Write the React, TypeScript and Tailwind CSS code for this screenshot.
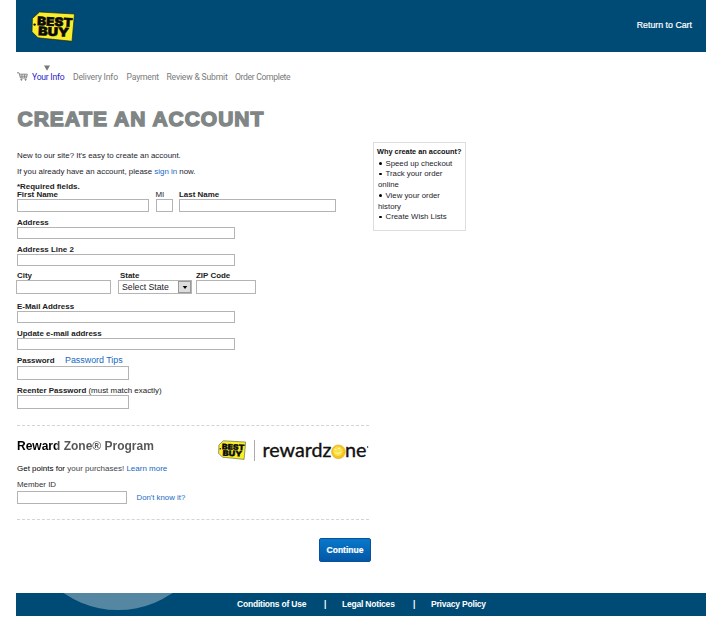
import type { ReactNode } from "react";

const INPUT = "block border border-[#b4b4b4] bg-white outline-none";

function TagLogo({ className }: { className: string }) {
  return (
    <svg viewBox="0 0 44 31" className={className} aria-label="Best Buy">
      <path d="M8.5 1 L43.5 3 L41 30.3 L7 26.8 L1 20.8 L1.4 7.5 Z" fill="#f8ee2c" stroke="#1c2a1c" strokeWidth=".7" />
      <circle cx="3.6" cy="13.6" r="1.2" fill="#111" />
      <g transform="rotate(2.5 22 15)" fontFamily="Inter, Liberation Sans, sans-serif" fontWeight="900" fill="#0a0a0a" stroke="#0a0a0a" strokeWidth=".5">
        <text x="6" y="15" fontSize="12" textLength="35.5" lengthAdjust="spacingAndGlyphs">BEST</text>
        <text x="7.4" y="25" fontSize="12" textLength="31" lengthAdjust="spacingAndGlyphs">BUY</text>
      </g>
    </svg>
  );
}

function Header() {
  return (
    <header className="flex h-[52px] items-center justify-between bg-[#004b75] pl-[15px] pr-[14px]">
      <TagLogo className="h-[31px] w-[44px]" />
      <a className="text-[8.8px] text-white [-webkit-text-stroke:0.2px_white]">Return to Cart</a>
    </header>
  );
}

function Steps() {
  return (
    <nav className="flex h-[50px] items-center font-[Roboto,sans-serif] text-[8.6px] tracking-[-0.18px] whitespace-nowrap text-[#7a7a7a]">
      <svg viewBox="0 0 11 10" className="ml-px h-[10px] w-[11px]" fill="none" stroke="#888" strokeWidth="1">
        <path d="M0 .8H2L3.5 6H9.5L10.3 2.2H2.6M3 4.2H10M5 2.2V6M7.6 2.2V6" />
        <circle cx="4.4" cy="7.7" r=".6" fill="#777" />
        <circle cx="8.6" cy="7.7" r=".6" fill="#777" />
      </svg>
      <span className="relative ml-[4px] w-[41px] tracking-[-0.25px] text-[#2a22c8]">
        Your Info
        <svg viewBox="0 0 6 6" className="absolute -top-[6px] left-[12px] size-[6px]">
          <path d="M0 .5H6L3 5.8Z" fill="#777" />
        </svg>
      </span>
      <span className="w-[53.5px]">Delivery Info</span>
      <span className="w-[40px]">Payment</span>
      <span className="w-[68.5px]">Review &amp; Submit</span>
      <span className="tracking-[-0.34px]">Order Complete</span>
    </nav>
  );
}

function Label({ children, className = "leading-[9.5px]" }: { children: ReactNode; className?: string }) {
  return <label className={`block h-[8px] text-[7.95px] font-bold whitespace-nowrap text-[#222] ${className}`}>{children}</label>;
}

function Why() {
  const item = "before:mr-[4px] before:ml-px before:inline-block before:size-[2.5px] before:rounded-full before:bg-black before:align-[1px] before:content-['']";
  return (
    <aside className="mt-[6px] ml-[4px] h-[89px] w-[93px] border border-[#ddd] pt-[4px] pl-[3px] text-[7.8px] leading-[10.75px] whitespace-nowrap text-[#1c1c2c]">
      <h2 className="mb-[1.5px] text-[7.35px] leading-[10px] font-bold text-[#111]">Why create an account?</h2>
      <ul className="pl-px">
        <li className={item}>Speed up checkout</li>
        <li className={item}>Track your order<br />online</li>
        <li className={item}>View your order<br />history</li>
        <li className={item}>Create Wish Lists</li>
      </ul>
    </aside>
  );
}

function Form() {
  return (
    <form className="w-[353px] pl-[1px] text-[7.9px] whitespace-nowrap text-[#1c1c2c]">
      <p className="mt-[11px] h-[16px] leading-[17.5px]">New to our site? It's easy to create an account.</p>
      <p className="h-[16px] leading-[17px]">If you already have an account, please <a className="text-[#1769c4]">sign in</a> now.</p>
      <Label className="mt-[4px] leading-[8px]">*Required fields.</Label>
      <div className="flex">
        <div className="w-[138.5px]"><Label className="leading-[8px]">First Name</Label><input className={`${INPUT} h-[13px] w-[132px]`} /></div>
        <div className="w-[23.5px]"><Label className="leading-[8px] font-normal">MI</Label><input className={`${INPUT} h-[13px] w-[17px]`} /></div>
        <div><Label className="leading-[8px]">Last Name</Label><input className={`${INPUT} h-[13px] w-[157px]`} /></div>
      </div>
      <Label className="mt-[6px] leading-[9.5px]">Address</Label>
      <input className={`${INPUT} mt-px h-[12px] w-[218px]`} />
      <Label className="mt-[6px] leading-[9.5px]">Address Line 2</Label>
      <input className={`${INPUT} mt-px h-[12px] w-[218px]`} />
      <div className="mt-[5px] flex">
        <div className="w-[103px]"><Label>City</Label><input className={`${INPUT} mt-px -ml-px h-[14px] w-[95px]`} /></div>
        <div className="w-[76px]">
          <Label>State</Label>
          <div className="mt-px -ml-[2px] flex h-[14px] w-[74px] border border-[#b4b4b4]">
            <span className="flex-1 pl-[3px] text-[8.7px] leading-[13px]">Select State</span>
            <span className="flex w-[13px] items-center justify-center border border-[#999] bg-[#ddd]">
              <svg viewBox="0 0 6 4" className="h-[3px] w-[6px]"><path d="M0 0H6L3 4Z" fill="#000" /></svg>
            </span>
          </div>
        </div>
        <div><Label>ZIP Code</Label><input className={`${INPUT} mt-px h-[14px] w-[60px]`} /></div>
      </div>
      <Label className="mt-[8px] leading-[9.5px]">E-Mail Address</Label>
      <input className={`${INPUT} mt-px h-[12px] w-[218px]`} />
      <Label className="mt-[6px] leading-[9.5px]">Update e-mail address</Label>
      <input className={`${INPUT} mt-px h-[12px] w-[218px]`} />
      <div className="mt-[6px] flex">
        <Label className="w-[48px] leading-[9.5px]">Password</Label>
        <a className="h-[8px] text-[8.9px] leading-[8px] text-[#1769c4]">Password Tips</a>
      </div>
      <input className={`${INPUT} mt-[2px] h-[14px] w-[112px]`} />
      <Label className="mt-[6px] leading-[9.5px]">Reenter Password <span className="font-normal">(must match exactly)</span></Label>
      <input className={`${INPUT} mt-px h-[14px] w-[112px]`} />

      <section className="mt-[16px] flex h-[95px] w-[352px] justify-between border-y border-dashed border-[#d4d4d4]">
        <div>
          <h2 className="mt-[12px] h-[16px] bg-[linear-gradient(90deg,#000_38px,#555_42px)] bg-clip-text text-[12px] leading-[16px] font-bold text-transparent">Reward Zone® Program</h2>
          <p className="mt-[9px] h-[12px] text-[8px] leading-[12px] text-[#444]"><span className="text-black">Get points for</span> your purchases! <a className="text-[#1769c4]">Learn more</a></p>
          <label className="mt-[4px] block h-[11px] leading-[11px] text-[#333]">Member ID</label>
          <div className="mt-[1px] flex items-center">
            <input className={`${INPUT} h-[13px] w-[110px]`} />
            <a className="ml-[9.5px] text-[7.8px] text-[#1769c4]">Don't know it?</a>
          </div>
        </div>
        <div className="mt-[12px] flex h-[24px] items-center">
          <TagLogo className="h-[20px] w-[28px]" />
          <span className="ml-[8px] h-[21px] w-px bg-[#aaa]" />
          <svg viewBox="0 0 108 24" className="ml-[6px] h-[24px] w-[108px]" fontFamily="Lato, sans-serif" fontSize="19.5" fill="#111">
            <g stroke="#111" strokeWidth=".35">
              <text x="1.5" y="18.5" textLength="69" lengthAdjust="spacingAndGlyphs">rewardz</text>
              <text x="84" y="18.5" textLength="21.5" lengthAdjust="spacingAndGlyphs">ne</text>
            </g>
            <circle cx="77.4" cy="13.8" r="6.9" fill="#f4c51d" stroke="#d9a51b" strokeWidth=".5" />
            <circle cx="77" cy="13.3" r="4.8" fill="#fbe04c" />
            <path d="M73.5 11.5h2m1.5-1h2M74 14.5q3 2.5 6-.5" stroke="#fff6b0" fill="none" />
            <circle cx="106.6" cy="9" r=".7" />
          </svg>
        </div>
      </section>
      <button type="button" className="mt-[18px] ml-[302px] block h-[24px] w-[52px] rounded-[2px] border border-[#07529b] bg-linear-to-b from-[#0878cb] to-[#0557a6] text-[8.5px] font-bold text-white [-webkit-text-stroke:0.2px_white]">Continue</button>
    </form>
  );
}

export default function App() {
  return (
    <div className="h-[635px] w-[720px] overflow-hidden bg-white pl-[16px] font-['Liberation_Sans',Arial,sans-serif]">
      <div className="w-[690px]">
        <Header />
        <Steps />
        <h1 className="ml-[1.5px] h-[34px] text-[21px] leading-[34px] font-bold tracking-[0.97px] whitespace-nowrap text-[#808585] [-webkit-text-stroke:1.4px_#808585]">CREATE AN ACCOUNT</h1>
        <div className="flex h-[457px] items-start">
          <Form />
          <Why />
        </div>
        <footer className="relative flex h-[23px] items-center overflow-hidden bg-[#004b75] pl-[221px] text-[8.5px] font-bold tracking-[-0.2px] whitespace-nowrap text-white">
          <span className="absolute -top-[175px] left-[6px] size-[192px] rounded-full bg-[#5587a3]" />
          <a className="w-[87px]">Conditions of Use</a>
          <span className="w-[18px]">|</span>
          <a className="w-[71px]">Legal Notices</a>
          <span className="w-[18px]">|</span>
          <a>Privacy Policy</a>
        </footer>
      </div>
    </div>
  );
}
